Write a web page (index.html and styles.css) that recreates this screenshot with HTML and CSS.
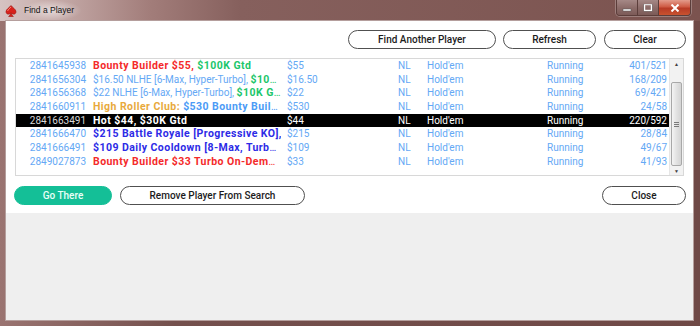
FILE: index.html
```html
<!DOCTYPE html>
<html lang="en">

<head>
    <meta charset="UTF-8">
    <meta name="viewport" content="width=device-width, initial-scale=1.0">
    <title>Find a Player</title>
    <link rel="stylesheet" href="styles.css">
</head>

<body>
<div class="window">
    <div class="titlebar">
        <svg class="app-icon" width="12" height="12" viewBox="0 0 12 12">
            <path d="M6 0.5 C7.5 2.6 11 4.2 11 6.8 C11 8.5 9.6 9.4 8.2 9.1 C7.4 8.9 6.8 8.4 6.5 7.9 C6.6 9.4 7.2 10.6 8.4 11.5 L3.6 11.5 C4.8 10.6 5.4 9.4 5.5 7.9 C5.2 8.4 4.6 8.9 3.8 9.1 C2.4 9.4 1 8.5 1 6.8 C1 4.2 4.5 2.6 6 0.5 Z" fill="#d8221c" stroke="#9c1510" stroke-width="0.6"/>
            <path d="M6 2 C5 3.4 3 4.4 2.6 6" stroke="#ff9a8a" stroke-width="0.8" fill="none"/>
        </svg>
        <span class="title">Find a Player</span>
        <div class="controls">
            <div class="ctl">
                <svg width="10" height="8" viewBox="0 0 10 8"><rect x="1" y="5" width="8" height="2" fill="#fff" stroke="#555" stroke-width="0.5"/></svg>
            </div>
            <div class="ctl">
                <svg width="10" height="8" viewBox="0 0 10 8"><rect x="1.5" y="0.5" width="7" height="6" fill="none" stroke="#fff" stroke-width="1.4"/><rect x="0.8" y="0" width="8.4" height="7.4" fill="none" stroke="#555" stroke-width="0.4"/></svg>
            </div>
            <div class="ctl close">
                <svg width="10" height="8" viewBox="0 0 10 8"><path d="M1.5 0.5 L8.5 7.5 M8.5 0.5 L1.5 7.5" stroke="#fff" stroke-width="2"/></svg>
            </div>
        </div>
    </div>

    <div class="client">
        <div class="panel">
            <div class="toolbar">
                <button class="btn w-find">Find Another Player</button>
                <button class="btn w-refresh">Refresh</button>
                <button class="btn w-clear">Clear</button>
            </div>

            <div class="list">
                <div class="rows">
                    <div class="row">
                        <span class="id">2841645938</span>
                        <span class="name green"><b class="red">Bounty Builder $55, </b><b>$100K Gtd</b></span>
                        <span>$55</span><span>NL</span><span>Hold'em</span><span>Running</span><span class="num">401/521</span>
                    </div>
                    <div class="row">
                        <span class="id">2841656304</span>
                        <span class="name green"><span>$16.50 NLHE [6-Max, Hyper-Turbo], </span><b>$10K Gtd</b></span>
                        <span>$16.50</span><span>NL</span><span>Hold'em</span><span>Running</span><span class="num">168/209</span>
                    </div>
                    <div class="row">
                        <span class="id">2841656368</span>
                        <span class="name green"><span>$22 NLHE [6-Max, Hyper-Turbo], </span><b>$10K Gtd</b></span>
                        <span>$22</span><span>NL</span><span>Hold'em</span><span>Running</span><span class="num">69/421</span>
                    </div>
                    <div class="row">
                        <span class="id">2841660911</span>
                        <span class="name blue"><b class="orange">High Roller Club: </b><b>$530 Bounty Builder HR</b></span>
                        <span>$530</span><span>NL</span><span>Hold'em</span><span>Running</span><span class="num">24/58</span>
                    </div>
                    <div class="row selected">
                        <span class="id">2841663491</span>
                        <span class="name"><b>Hot $44, $30K Gtd</b></span>
                        <span>$44</span><span>NL</span><span>Hold'em</span><span>Running</span><span class="num">220/592</span>
                    </div>
                    <div class="row">
                        <span class="id">2841666470</span>
                        <span class="name violet clip"><b>$215 Battle Royale [Progressive KO],</b></span>
                        <span>$215</span><span>NL</span><span>Hold'em</span><span>Running</span><span class="num">28/84</span>
                    </div>
                    <div class="row">
                        <span class="id">2841666491</span>
                        <span class="name violet"><b>$109 Daily Cooldown [8-Max, Turbo, Progressive KO]</b></span>
                        <span>$109</span><span>NL</span><span>Hold'em</span><span>Running</span><span class="num">49/67</span>
                    </div>
                    <div class="row">
                        <span class="id">2849027873</span>
                        <span class="name red"><b>Bounty Builder $33 Turbo On-Demand</b></span>
                        <span>$33</span><span>NL</span><span>Hold'em</span><span>Running</span><span class="num">41/93</span>
                    </div>
                </div>
                <div class="scrollbar">
                    <div class="arrow">&#9650;</div>
                    <div class="track">
                        <div class="thumb"><span class="grip"></span></div>
                    </div>
                    <div class="arrow">&#9660;</div>
                </div>
            </div>

            <div class="footer">
                <button class="btn primary w-go">Go There</button>
                <button class="btn w-remove">Remove Player From Search</button>
                <button class="btn w-close">Close</button>
            </div>
        </div>
        <div class="blank"></div>
    </div>
</div>
</body>

</html>
```

FILE: styles.css
```css
body {
    margin: 0;
    font-family: Roboto, "Liberation Sans", sans-serif;
    background: #6f4946;
}

.window {
    width: 700px;
    height: 326px;
    box-sizing: border-box;
    display: flex;
    flex-direction: column;
    padding: 0 7px 6px 6px;
    background: linear-gradient(90deg, #9a7471 0%, #74504d 25%, #6f4946 100%);
}

/* title bar */
.titlebar {
    height: 21px;
    display: flex;
    align-items: center;
    margin: 0 -7px 0 -6px;
    padding: 0 9px 0 5px;
    background: linear-gradient(90deg, #d6c3c2 0%, #c4a9a7 60px, #a27d7a 150px, #86605d 240px, #7b534f 100%);
}

.app-icon {
    flex: none;
}

.title {
    margin-left: 4px;
    padding: 0 8px 0 3px;
    font-family: "Liberation Sans", Arial, sans-serif;
    font-size: 8.5px;
    color: #111;
    line-height: 21px;
    background: radial-gradient(ellipse at center, rgba(255,255,255,.55) 0%, rgba(255,255,255,0) 70%);
}

.controls {
    margin-left: auto;
    align-self: flex-start;
    display: flex;
    border: 1px solid #5c3e3b;
    border-top: none;
    border-radius: 0 0 4px 4px;
    overflow: hidden;
    box-shadow: 0 0 0 1px rgba(255,255,255,.25);
}

.ctl {
    width: 20px;
    height: 15px;
    display: flex;
    align-items: center;
    justify-content: center;
    background: linear-gradient(180deg, #a58886 0%, #8d6d6a 50%, #7c5a57 100%);
    border-right: 1px solid #5c3e3b;
}

.ctl.close {
    width: 31px;
    border-right: none;
    background: linear-gradient(180deg, #e39b8c 0%, #cf5b45 45%, #b83b26 55%, #c9522f 100%);
}

/* client area */
.client {
    flex: 1;
    display: flex;
    flex-direction: column;
    box-shadow: 0 0 0 1px #b59f9d;
}

.panel {
    background: #fff;
    padding: 9px 7px 8px 8px;
}

.toolbar {
    display: flex;
    justify-content: flex-end;
}

.btn {
    height: 19px;
    box-sizing: border-box;
    border: 1px solid #505050;
    border-radius: 10px;
    background: #fff;
    font-family: Roboto, "Liberation Sans", sans-serif;
    font-size: 10px;
    font-weight: 500;
    color: #1c1c1c;
    padding: 0;
}

.btn.primary {
    background: #14bf97;
    border-color: #14bf97;
    color: #e9fff8;
}

.w-find { width: 148px; }
.w-refresh { width: 93px; margin-left: 7px; }
.w-clear { width: 82px; margin-left: 8px; }
.w-go { width: 98px; }
.w-remove { width: 185px; margin-left: 8px; }
.w-close { width: 84px; margin-left: auto; }

/* tournament list */
.list {
    margin: 9px 2px 0 1px;
    height: 118px;
    box-sizing: border-box;
    border: 1px solid #d8d8d8;
    display: flex;
}

.rows {
    flex: 1;
    font-size: 10px;
    color: #64a8f5;
}

.row {
    display: grid;
    grid-template-columns: 77px 194px 111px 29px 120px 53px 67px;
    height: 13.7px;
    line-height: 13.7px;
    white-space: nowrap;
}

.row .id {
    text-align: right;
    padding-right: 7px;
}

.row .num {
    text-align: right;
}

.name {
    overflow: hidden;
    text-overflow: ellipsis;
    margin-right: 6px;
}

.name.clip {
    text-overflow: clip;
}

.name b {
    font-weight: 700;
    font-size: 10.5px;
    letter-spacing: 0.45px;
}

.red { color: #f42a2a; }
.green { color: #1cc66b; }
.orange { color: #e8a93c; }
.blue { color: #4b9bf6; }
.violet { color: #2d2be6; }

.name.green > span { color: #64a8f5; }

.row.selected {
    background: #000;
    color: #fff;
}

.row.selected .id {
    color: #d8d8d8;
}

.row.selected .name {
    color: #fff;
}

/* scrollbar */
.scrollbar {
    width: 13px;
    display: flex;
    flex-direction: column;
    background: #f2f2f2;
    border-left: 1px solid #e6e6e6;
}

.arrow {
    height: 11px;
    font-size: 5px;
    line-height: 11px;
    text-align: center;
    color: #404040;
}

.track {
    flex: 1;
    padding-top: 12px;
}

.thumb {
    height: 82px;
    margin: 0 1px;
    border: 1px solid #a8a8a8;
    border-radius: 2px;
    background: linear-gradient(90deg, #f4f4f4 0%, #e2e2e2 50%, #d4d4d4 100%);
    display: flex;
    align-items: center;
    justify-content: center;
}

.grip {
    width: 5px;
    height: 5px;
    background: repeating-linear-gradient(180deg, #7a7a7a 0, #7a7a7a 1px, transparent 1px, transparent 2px);
}

.footer {
    display: flex;
    margin-top: 10px;
}

.blank {
    flex: 1;
    background: #efefef;
}
```
